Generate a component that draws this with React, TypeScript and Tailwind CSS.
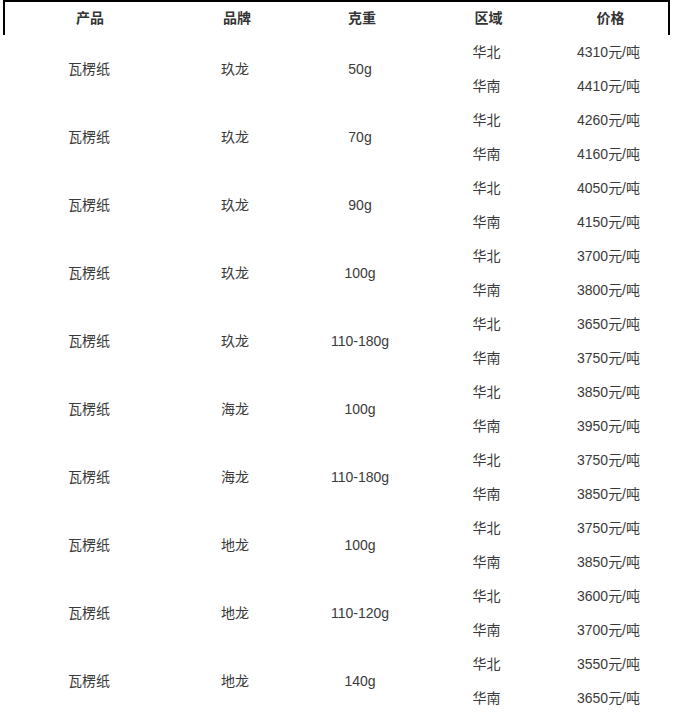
import React from "react";

interface PriceRow {
  brand: string;
  weight: string;
  north: string;
  south: string;
}

const rows: PriceRow[] = [
  { brand: "玖龙", weight: "50g", north: "4310", south: "4410" },
  { brand: "玖龙", weight: "70g", north: "4260", south: "4160" },
  { brand: "玖龙", weight: "90g", north: "4050", south: "4150" },
  { brand: "玖龙", weight: "100g", north: "3700", south: "3800" },
  { brand: "玖龙", weight: "110-180g", north: "3650", south: "3750" },
  { brand: "海龙", weight: "100g", north: "3850", south: "3950" },
  { brand: "海龙", weight: "110-180g", north: "3750", south: "3850" },
  { brand: "地龙", weight: "100g", north: "3750", south: "3850" },
  { brand: "地龙", weight: "110-120g", north: "3600", south: "3700" },
  { brand: "地龙", weight: "140g", north: "3550", south: "3650" },
];

const cols = "grid grid-cols-[172px_120px_130px_123px_121px]";

export default function App() {
  return (
    <div
      className="w-[674px] h-[718px] overflow-hidden bg-white text-[14px] text-[#3a3a3a]"
      style={{ fontFamily: '"Liberation Sans", "Noto Sans CJK SC", sans-serif' }}
    >
      <div className="ml-[3px] w-[667px]">
        {/* Header */}
        <div className={`${cols} h-[35px] border-t-2 border-l-2 border-r-2 border-black items-center font-bold text-[#333]`}>
          <div className="text-center -ml-[2px]">产品</div>
          <div className="text-center">品牌</div>
          <div className="text-center">克重</div>
          <div className="text-center">区域</div>
          <div className="text-center">价格</div>
        </div>

        {/* Body */}
        {rows.map((row, i) => (
          <div key={i} className={`${cols} h-[68px] items-center`}>
            <div className="text-center">瓦楞纸</div>
            <div className="text-center">{row.brand}</div>
            <div className="text-center">{row.weight}</div>
            <div className="flex flex-col">
              <div className="h-[34px] flex items-center justify-center">华北</div>
              <div className="h-[34px] flex items-center justify-center">华南</div>
            </div>
            <div className="flex flex-col">
              <div className="h-[34px] flex items-center justify-center">{row.north}元/吨</div>
              <div className="h-[34px] flex items-center justify-center">{row.south}元/吨</div>
            </div>
          </div>
        ))}
      </div>
    </div>
  );
}
